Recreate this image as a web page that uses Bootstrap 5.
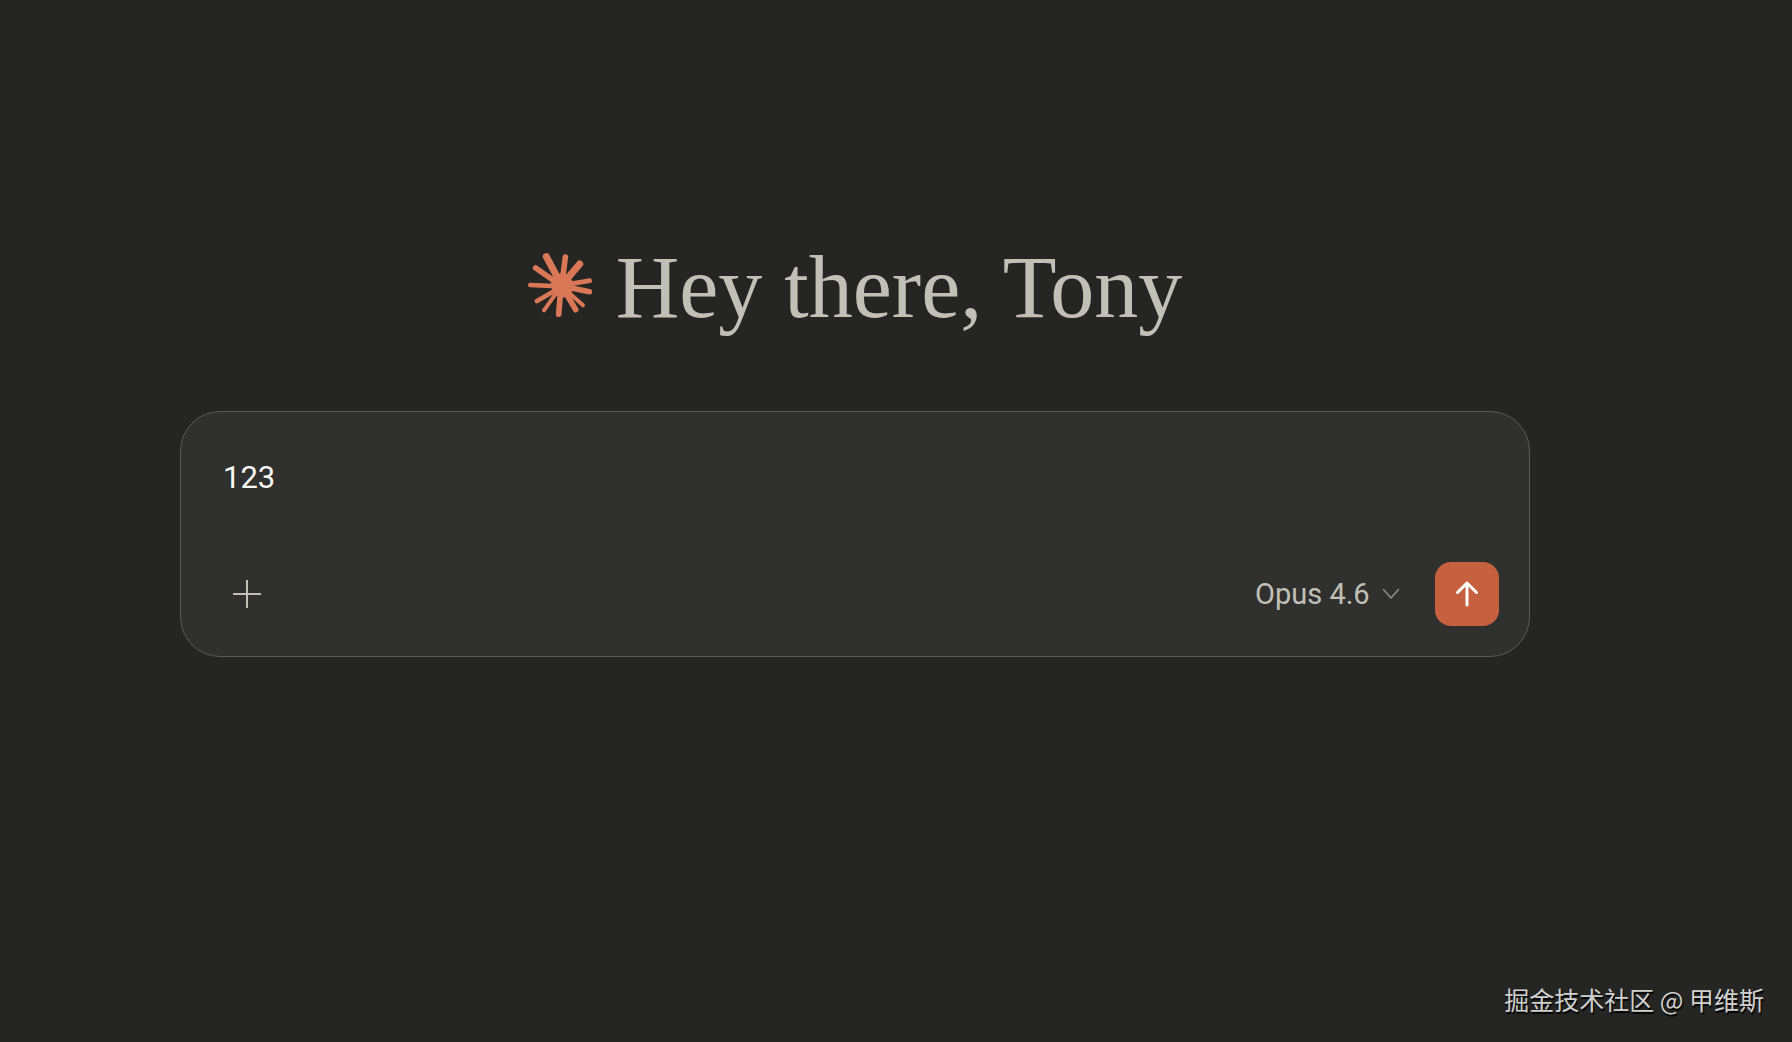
<!DOCTYPE html>
<html lang="en">
<head>
<meta charset="utf-8">
<meta name="viewport" content="width=device-width, initial-scale=1">
<title>New chat</title>
<link href="https://cdn.jsdelivr.net/npm/bootstrap@5.3.0/dist/css/bootstrap.min.css" rel="stylesheet">
<style>
  body { background: #252523; color: #c2c0b6; font-family: Roboto, "Liberation Sans", "Noto Sans CJK SC", sans-serif; }
  .chat-home { padding: 228px 262px 0 180px; }
  .greeting { gap: 24px; margin-bottom: 69px; }
  .greeting h1 { font-family: "Liberation Serif", serif; font-size: 88px; line-height: 108px; padding-top: 6px; font-weight: 400; color: #c2c0b6; }
  .composer { background: #30302e; border: 1px solid #5a5955; border-radius: 40px; padding: 46px 30px 30px 42px; }
  .prompt { font-size: 31px; line-height: 40px; height: 104px; color: #faf9f5; resize: none; outline: 0; }
  .tool-btn { width: 48px; height: 48px; color: #c2c0b6; }
  .model { gap: 35px; }
  .model select { appearance: none; font-size: 29px; line-height: 40px; color: #c2c0b6; padding: 0 30px 0 0; outline: 0; }
  .model svg { right: 0; pointer-events: none; }
  .send-btn { width: 64px; height: 64px; border-radius: 16px; background: #c6613f; color: #fff; }
  .send-btn:hover, .send-btn:active { background: #b9573a; color: #fff; }
  .credit { font-family: "Noto Sans CJK SC", sans-serif; font-size: 25px; line-height: 36px; padding: 0 28px 25px; color: #d0d0cf; text-shadow: 1px 2px 1px #000; }
</style>
<script src="https://cdn.jsdelivr.net/npm/bootstrap@5.3.0/dist/js/bootstrap.bundle.min.js" defer></script>
</head>
<body class="d-flex flex-column min-vh-100">
<main class="chat-home">
  <div class="greeting d-flex align-items-center justify-content-center">
    <svg width="64" height="64" viewBox="51 53 192 192" fill="none" stroke="#d97757" stroke-linecap="round" aria-hidden="true">
      <path stroke-width="21" d="M152 150 106 64M152 150 206 86"/>
      <path stroke-width="17" d="M152 152 163 65M152 152 74 98M152 152 235 169M150 152 143 237M152 152 194 223"/>
      <path stroke-width="14" d="M152 150 236 136M152 153 58 149M152 154 78 197"/>
      <path stroke-width="12" d="M148 156 99 225M154 154 216 210"/>
      <path fill="#d97757" stroke-width="4" stroke-linejoin="round" d="M124 126 149 116 164 118 182 136 184 162 174 182 148 186 128 172 122 152z"/>
    </svg>
    <h1 class="mb-0">Hey there, Tony</h1>
  </div>
  <form class="composer" onsubmit="return false">
    <textarea class="prompt d-block w-100 bg-transparent border-0 p-0" aria-label="Message" rows="1">123</textarea>
    <div class="d-flex align-items-center justify-content-between">
      <button type="button" class="tool-btn btn border-0 p-0 d-flex align-items-center justify-content-center" aria-label="Add content">
        <svg width="28" height="28" viewBox="0 0 28 28" stroke="currentColor" stroke-width="2"><path d="M14 0V28M0 14H28"/></svg>
      </button>
      <div class="model d-flex align-items-center">
        <div class="position-relative d-flex align-items-center">
          <select class="bg-transparent border-0" aria-label="Model"><option>Opus 4.6</option></select>
          <svg class="position-absolute" width="18" height="12" viewBox="0 0 18 12" fill="none" stroke="#8f8e87" stroke-width="1.5" stroke-linecap="round" stroke-linejoin="round" aria-hidden="true"><path d="M1.500 1.500 9 10 16.500 1.500"/></svg>
        </div>
        <button type="submit" class="send-btn btn border-0 p-0 d-flex align-items-center justify-content-center" aria-label="Send message">
          <svg width="24" height="28" viewBox="0 0 24 28" fill="none" stroke="currentColor" stroke-width="3" stroke-linecap="round" stroke-linejoin="round"><path d="M12 25V3M2.500 12.500 12 3 21.500 12.500"/></svg>
        </button>
      </div>
    </div>
  </form>
</main>
<footer class="credit mt-auto text-end">掘金技术社区 @ 甲维斯</footer>
</body>
</html>
